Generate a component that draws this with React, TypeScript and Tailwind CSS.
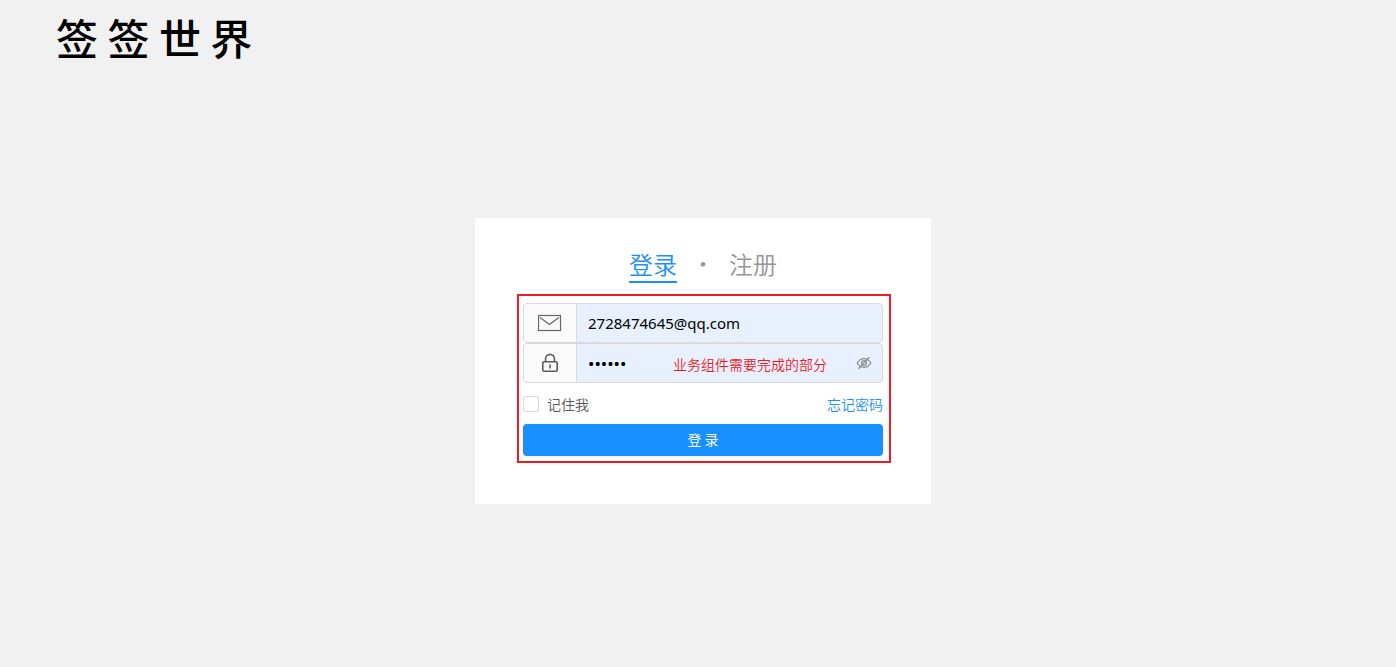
import { useState } from 'react';
import type { ReactNode } from 'react';

function MailIcon() {
  return (
    <svg width="24" height="18" viewBox="0 0 24 18" fill="none" stroke="#666" strokeWidth="1.2" aria-hidden="true">
      <rect x="0.5" y="1.5" width="22" height="15" />
      <path d="M2 3.5 11.5 10.5 21 3.5" />
    </svg>
  );
}

function LockIcon() {
  return (
    <svg width="18" height="20" viewBox="0 0 18 20" fill="none" stroke="#5c5c5c" strokeWidth="1.6" aria-hidden="true">
      <rect x="1.8" y="8.8" width="14.4" height="9.4" rx="1.2" />
      <path d="M4.6 8.5V5.8a4.4 4.4 0 0 1 8.8 0v2.7M9 11.5v4" />
    </svg>
  );
}

function HiddenEyeIcon() {
  return (
    <svg width="16" height="14" viewBox="0 0 16 14" fill="none" stroke="#8b8f98" strokeWidth="1.3" aria-hidden="true">
      <path d="M1.2 7C3 3.9 5.3 2.6 8 2.6S13 3.9 14.8 7C13 10.1 10.7 11.4 8 11.4S3 10.1 1.2 7Z" />
      <circle cx="8" cy="7" r="2.4" />
      <path d="M2.5 12.7 13.3 1.3" />
    </svg>
  );
}

type FieldProps = { id: string; label: string; icon: ReactNode; children: ReactNode };

function Field({ id, label, icon, children }: FieldProps) {
  return (
    <div className="relative flex h-10 overflow-hidden rounded border border-[#d9d9d9] bg-[#e8f0fe]">
      <label
        htmlFor={id}
        aria-label={label}
        className="flex w-[53px] shrink-0 items-center justify-center border-r border-[#d9d9d9] bg-[#fafafa]"
      >
        {icon}
      </label>
      {children}
    </div>
  );
}

export default function App() {
  const [email, setEmail] = useState('2728474645@qq.com');
  const [password, setPassword] = useState('123456');
  const [visible, setVisible] = useState(false);

  return (
    <div className="min-h-screen bg-[#f1f1f1] font-['Noto_Sans','Noto_Sans_CJK_SC',sans-serif] text-sm text-[#595959]">
      <header className="flex h-[74px] items-center pl-14">
        <h1 className="font-['Noto_Sans_CJK_SC',sans-serif] text-[42px] leading-none font-medium text-black">
          签 签 世 界
        </h1>
      </header>

      <main className="flex justify-center pt-36 pl-[10px]">
        <section className="w-full max-w-[456px] bg-white pt-[31px] pr-10 pb-[41px] pl-[42px]">
          <nav className="flex items-start justify-center pr-[2px] font-['Noto_Sans_CJK_SC',sans-serif] text-2xl leading-[30px] font-[350] text-[#969696]">
            <a href="#login" className="border-b-2 border-[#1890ff] pb-[2px] text-[#1890ff]">
              登录
            </a>
            <span className="w-[52px] text-center text-lg leading-[28px] font-bold">·</span>
            <a href="#register">注册</a>
          </nav>

          <form
            className="mt-[11px] border-2 border-[#ed1c24] pt-[7px] pr-[6px] pb-[5px] pl-1"
            onSubmit={(event) => event.preventDefault()}
          >
            <Field id="email" label="邮箱" icon={<MailIcon />}>
              <input
                id="email"
                type="email"
                value={email}
                onChange={(event) => setEmail(event.target.value)}
                className="min-w-0 flex-1 px-[11px] pt-[2px] text-[15px] text-black outline-none"
              />
            </Field>
            <Field id="password" label="密码" icon={<LockIcon />}>
              <input
                id="password"
                type={visible ? 'text' : 'password'}
                value={password}
                onChange={(event) => setPassword(event.target.value)}
                className="min-w-0 flex-1 px-[11px] pt-[2px] text-[17px] text-black outline-none"
              />
              <span className="pointer-events-none absolute top-[10px] right-[55px] font-['Noto_Sans_CJK_SC',sans-serif] text-sm font-[350] text-[#ed1c24]">
                业务组件需要完成的部分
              </span>
              <button type="button" aria-label="显示密码" onClick={() => setVisible(!visible)} className="mr-[10px]">
                <HiddenEyeIcon />
              </button>
            </Field>

            <div className="flex h-[41px] items-center justify-between font-['Noto_Sans_CJK_SC',sans-serif] font-[350]">
              <label className="flex items-center gap-2">
                <input
                  type="checkbox"
                  className="size-4 appearance-none rounded-xs border border-[#d9d9d9] bg-white checked:border-[#1890ff] checked:bg-[#1890ff]"
                />
                记住我
              </label>
              <a href="#forgot" className="text-[#1890ff]">
                忘记密码
              </a>
            </div>

            <button
              type="submit"
              className="h-8 w-full rounded bg-[#1890ff] pb-[2px] font-['Noto_Sans_CJK_SC',sans-serif] text-sm text-white shadow-[0_2px_0_rgba(0,0,0,0.04)]"
            >
              登 录
            </button>
          </form>
        </section>
      </main>
    </div>
  );
}
